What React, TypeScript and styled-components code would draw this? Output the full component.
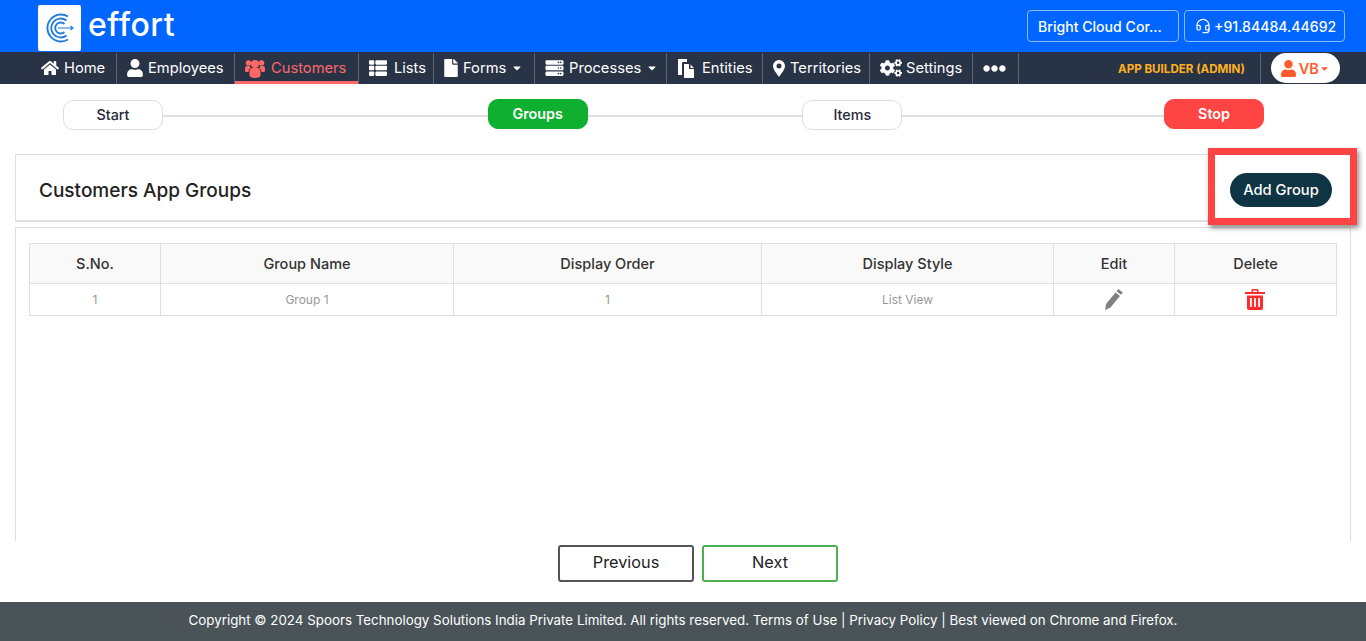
import React from "react";
import styled, { createGlobalStyle } from "styled-components";
import {
  FaCaretDown,
  FaCogs,
  FaEllipsisH,
  FaFile,
  FaHome,
  FaServer,
  FaThList,
  FaUser,
} from "react-icons/fa";
import { Headset } from "lucide-react";

const GlobalStyle = createGlobalStyle`
  html, body {
    margin: 0;
    padding: 0;
    height: 100%;
    overflow: hidden;
    background: #fff;
    font-family: "Inter", "Open Sans", sans-serif;
  }
  * {
    box-sizing: border-box;
  }
`;

const Page = styled.div`
  position: relative;
  display: flex;
  flex-direction: column;
  width: 1366px;
  height: 641px;
`;

const TopBar = styled.div`
  display: flex;
  align-items: center;
  height: 52px;
  padding: 0 21px 0 38px;
  background-color: #0066ff;
`;

const LogoBox = styled.div`
  display: flex;
  align-items: center;
  justify-content: center;
  width: 43px;
  height: 46px;
  margin-top: 3px;
  background: #fff;
  border-radius: 2px;
`;

const LogoText = styled.div`
  margin: 0 0 3px 7px;
  color: #fff;
  font-size: 32px;
  font-weight: 500;
  letter-spacing: 0.5px;
  line-height: 46px;
`;

const TopActions = styled.div`
  display: flex;
  gap: 5px;
  margin-left: auto;
`;

const TopButton = styled.div<{ $w: number }>`
  display: flex;
  align-items: center;
  gap: 3px;
  width: ${(p) => p.$w}px;
  height: 32px;
  padding-left: 10px;
  color: #fff;
  font-size: 14.1px;
  font-weight: 500;
  white-space: nowrap;
  border: 1px solid rgba(255, 255, 255, 0.55);
  border-radius: 4px;
`;

const NavBar = styled.div`
  display: flex;
  align-items: stretch;
  height: 32px;
  padding-left: 31px;
  background-color: #293346;
`;

const NavItem = styled.div<{ $w: number; $active?: boolean }>`
  display: flex;
  align-items: center;
  width: ${(p) => p.$w}px;
  height: 31px;
  padding: 0 0 1px 10px;
  margin-top: 1px;
  color: ${(p) => (p.$active ? "#ff6868" : "#fff")};
  font-size: 14.7px;
  white-space: nowrap;
  border-right: 1px solid #5d6470;
  box-shadow: ${(p) => (p.$active ? "inset 0 -3px 0 #ff6868" : "none")};
`;

const NavIcon = styled.span<{ $box: number; $iw: number; $ih: number }>`
  display: flex;
  align-items: center;
  flex: none;
  width: ${(p) => p.$box}px;

  svg {
    width: ${(p) => p.$iw}px;
    height: ${(p) => p.$ih}px;
  }
`;

const Caret = styled.span`
  display: inline-flex;
  margin-left: 5px;
  font-size: 12px;
`;

const RoleLabel = styled.div`
  display: flex;
  align-items: center;
  height: 31px;
  margin: 1px 0 0 99px;
  padding-right: 15px;
  color: #ffb01f;
  font-size: 11.6px;
  font-weight: 700;
  white-space: nowrap;
  border-right: 1px solid #5d6470;
`;

const UserPill = styled.div`
  display: flex;
  align-items: center;
  justify-content: center;
  width: 69px;
  height: 30px;
  margin: 1px 0 0 10px;
  color: #ff5c2e;
  font-size: 14.5px;
  font-weight: 600;
  background: #fff;
  border-radius: 15px;
`;

const Stepper = styled.div`
  display: flex;
  align-items: center;
  height: 60px;
  padding: 0 102px 0 63px;
`;

const Step = styled.div<{ $bg?: string }>`
  display: flex;
  align-items: center;
  justify-content: center;
  flex: none;
  width: 100px;
  height: 30px;
  margin-top: ${(p) => (p.$bg ? 0 : 2)}px;
  padding-bottom: ${(p) => (p.$bg ? 2 : 1)}px;
  color: ${(p) => (p.$bg ? "#fff" : "#26283a")};
  font-size: 14.3px;
  font-weight: ${(p) => (p.$bg ? 600 : 500)};
  background: ${(p) => p.$bg ?? "#fff"};
  border: 1px solid ${(p) => p.$bg ?? "#dedede"};
  border-radius: 10px;
`;

const Connector = styled.div<{ $grow: number }>`
  flex: ${(p) => p.$grow} 1 0;
  height: 2px;
  margin-top: 3px;
  background: #dfdfdf;
`;

const Main = styled.div`
  flex: 1;
  display: flex;
  flex-direction: column;
  gap: 5px;
  min-height: 0;
  padding: 10px 15px 0;
  overflow: hidden;
`;

const TitlePanel = styled.div`
  display: flex;
  align-items: center;
  justify-content: space-between;
  flex: none;
  height: 68px;
  padding: 5px 18px 0 23px;
  border: 1px solid #dfdfdf;
  border-bottom-width: 2px;
`;

const Title = styled.div`
  color: #222;
  font-size: 19px;
  font-weight: 500;
`;

const AddButton = styled.div`
  display: flex;
  align-items: center;
  justify-content: center;
  width: 102px;
  height: 34px;
  color: #fff;
  font-size: 14.7px;
  font-weight: 500;
  background: #0f3544;
  border-radius: 17px;
`;

const Highlight = styled.div`
  position: absolute;
  left: 1208px;
  top: 148px;
  width: 149px;
  height: 77px;
  border: 7px solid #ff4444;
  box-shadow: 2px 3px 5px rgba(0, 0, 0, 0.45);
`;

const TablePanel = styled.div`
  flex: 1;
  padding: 15px 13px 0;
  border: 1px solid #dfdfdf;
  border-bottom: none;
`;

const Table = styled.table`
  width: 1307px;
  table-layout: fixed;
  border-collapse: collapse;
`;

const Th = styled.th<{ $w: number }>`
  width: ${(p) => p.$w}px;
  height: 40px;
  padding: 0;
  color: #333;
  font-size: 14.5px;
  font-weight: 500;
  background: #f9f9f9;
  border: 1px solid #dfdfdf;
`;

const Td = styled.td`
  height: 32px;
  padding: 0;
  color: #999;
  font-size: 12px;
  text-align: center;
  border: 1px solid #dfdfdf;
`;

const CellIcon = styled.svg<{ $mr?: number }>`
  display: inline-block;
  margin-right: ${(p) => p.$mr ?? 0}px;
  vertical-align: middle;
`;

const Pager = styled.div`
  display: flex;
  justify-content: center;
  gap: 8px;
  flex: none;
  height: 61px;
  padding: 4px 0 0 30px;
`;

const PagerButton = styled.div<{ $color: string }>`
  display: flex;
  align-items: center;
  justify-content: center;
  width: 136px;
  height: 37px;
  padding-bottom: 3px;
  color: #222;
  font-size: 16.3px;
  border: 2px solid ${(p) => p.$color};
  border-radius: 3px;
`;

const Footer = styled.div`
  display: flex;
  align-items: center;
  justify-content: center;
  flex: none;
  height: 39px;
  padding-bottom: 3px;
  color: #fff;
  font-size: 13.35px;
  background: #4a5458;
`;

const EffortMark = () => (
  <svg width="28" height="30" viewBox="0 0 28 30" fill="none" stroke="#1f7ae0">
    <path d="M22 3.500A13.500 13.500 0 1 0 22 26.500" strokeWidth="1.8" />
    <path d="M20.500 7.500A9.500 9.500 0 1 0 20.500 22.500" strokeWidth="1.8" />
    <path d="M18.500 11A5.500 5.500 0 1 0 18.500 19" strokeWidth="1.8" />
    <path d="M12 15H27M24.500 13L27 15L24.500 17" strokeWidth="1.2" />
  </svg>
);

const EntitiesIcon = () => (
  <svg viewBox="0 0 19 19" fill="#fff">
    <path d="M1 0h9v3H6a1 1 0 0 0-1 1v12H1z" />
    <path d="M7 5h5v5h5v9H7zM13.500 5.500l3.500 3.500h-3.500z" />
  </svg>
);

const PinIcon = () => (
  <svg viewBox="0 0 12 17" fill="#fff">
    <path
      fillRule="evenodd"
      d="M6 0a6 6 0 0 0-6 6c0 3.500 4 8 6 11 2-3 6-7.500 6-11a6 6 0 0 0-6-6zm0 8.500a2.500 2.500 0 1 1 0-5 2.500 2.500 0 0 1 0 5z"
    />
  </svg>
);

const UsersIcon = () => (
  <svg viewBox="0 0 20 19" fill="#ff6868">
    <circle cx="10" cy="5" r="4" />
    <circle cx="3.500" cy="4" r="2.800" />
    <circle cx="16.500" cy="4" r="2.800" />
    <path d="M4.500 13c0-2.500 1.500-4 3-4h5c1.500 0 3 1.500 3 4v3.500c0 1.500-2.500 2.500-5.500 2.500s-5.500-1-5.500-2.500z" />
    <path d="M0 9c0-1 1-2 2-2h2.500c.5 1 1 1.500 1.500 2-1.500.8-2.500 2.200-2.500 4H1.500C.5 13 0 12.500 0 11.500z" />
    <path d="M20 9c0-1-1-2-2-2h-2.500c-.5 1-1 1.500-1.500 2 1.500.8 2.500 2.200 2.500 4h2c1 0 1.500-.5 1.500-1.500z" />
  </svg>
);

const PencilIcon = () => (
  <CellIcon width="18" height="21" viewBox="0 0 18 21" fill="#808080">
    <path d="M0 21l1-6L10.500 3.500l4.500 3.500L5.500 18.500z" />
    <path d="M11.500 2.300L13.300 0l4.500 3.500L16 5.800z" />
  </CellIcon>
);

const TrashIcon = () => (
  <CellIcon width="20" height="21" viewBox="0 0 20 21" fill="#ff2a2a" $mr={2}>
    <path
      fillRule="evenodd"
      d="M6.500 3V1.200C6.500.5 7 0 7.700 0h4.600c.7 0 1.200.5 1.200 1.200V3H20v2H0V3zM8 3h4V1.500H8zM2 6.500h16V19a2 2 0 0 1-2 2H4a2 2 0 0 1-2-2zM5 9v9h1.800V9zm4.100 0v9h1.800V9zM13.200 9v9H15V9z"
    />
  </CellIcon>
);

const navItems = [
  { label: "Home", w: 86, box: 23, iw: 18, ih: 16, icon: <FaHome /> },
  { label: "Employees", w: 118, box: 21, iw: 16, ih: 18, icon: <FaUser /> },
  { label: "Customers", w: 124, box: 26, iw: 20, ih: 19, icon: <UsersIcon />, active: true },
  { label: "Lists", w: 75, box: 25, iw: 18, ih: 18, icon: <FaThList /> },
  { label: "Forms", w: 101, box: 19, iw: 14, ih: 18, icon: <FaFile />, caret: true },
  { label: "Processes", w: 132, box: 24, iw: 19, ih: 18, icon: <FaServer />, caret: true },
  { label: "Entities", w: 96, box: 25, iw: 19, ih: 19, icon: <EntitiesIcon /> },
  { label: "Territories", w: 107, box: 17, iw: 12, ih: 17, icon: <PinIcon /> },
  { label: "Settings", w: 103, box: 26, iw: 22, ih: 18, icon: <FaCogs /> },
  { label: "", w: 46, box: 23, iw: 23, ih: 23, icon: <FaEllipsisH /> },
];

const columns = [
  { label: "S.No.", w: 131 },
  { label: "Group Name", w: 293 },
  { label: "Display Order", w: 308 },
  { label: "Display Style", w: 292 },
  { label: "Edit", w: 121 },
  { label: "Delete", w: 162 },
];

export default function App() {
  return (
    <Page>
      <GlobalStyle />
      <TopBar>
        <LogoBox>
          <EffortMark />
        </LogoBox>
        <LogoText>effort</LogoText>
        <TopActions>
          <TopButton $w={152}>Bright Cloud Cor...</TopButton>
          <TopButton $w={161}>
            <Headset size={16} strokeWidth={1.8} />
            +91.84484.44692
          </TopButton>
        </TopActions>
      </TopBar>
      <NavBar>
        {navItems.map((item) => (
          <NavItem key={item.w + item.label} $w={item.w} $active={item.active}>
            <NavIcon $box={item.box} $iw={item.iw} $ih={item.ih}>
              {item.icon}
            </NavIcon>
            {item.label}
            {item.caret && (
              <Caret>
                <FaCaretDown />
              </Caret>
            )}
          </NavItem>
        ))}
        <RoleLabel>APP BUILDER (ADMIN)</RoleLabel>
        <UserPill>
          <NavIcon $box={18} $iw={15} $ih={17}>
            <FaUser />
          </NavIcon>
          VB
          <FaCaretDown size={11} />
        </UserPill>
      </NavBar>
      <Stepper>
        <Step>Start</Step>
        <Connector $grow={325} />
        <Step $bg="#0fb02f">Groups</Step>
        <Connector $grow={215} />
        <Step>Items</Step>
        <Connector $grow={262} />
        <Step $bg="#ff4444">Stop</Step>
      </Stepper>
      <Main>
        <TitlePanel>
          <Title>Customers App Groups</Title>
          <AddButton>Add Group</AddButton>
        </TitlePanel>
        <TablePanel>
          <Table>
            <thead>
              <tr>
                {columns.map((col) => (
                  <Th key={col.label} $w={col.w}>
                    {col.label}
                  </Th>
                ))}
              </tr>
            </thead>
            <tbody>
              <tr>
                <Td>1</Td>
                <Td>Group 1</Td>
                <Td>1</Td>
                <Td>List View</Td>
                <Td>
                  <PencilIcon />
                </Td>
                <Td>
                  <TrashIcon />
                </Td>
              </tr>
            </tbody>
          </Table>
        </TablePanel>
      </Main>
      <Pager>
        <PagerButton $color="#555">Previous</PagerButton>
        <PagerButton $color="#4caf50">Next</PagerButton>
      </Pager>
      <Footer>
        Copyright © 2024 Spoors Technology Solutions India Private Limited. All rights reserved. Terms of Use | Privacy Policy | Best viewed on Chrome and Firefox.
      </Footer>
      <Highlight />
    </Page>
  );
}
